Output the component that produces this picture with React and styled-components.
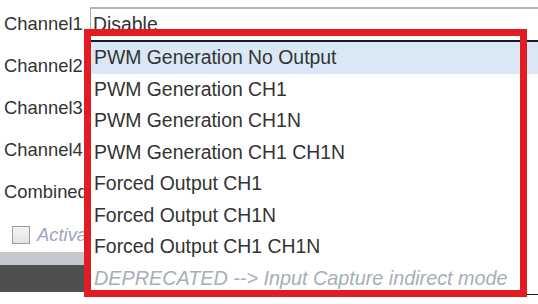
import React from 'react'
import styled, { createGlobalStyle } from 'styled-components'

const GlobalStyle = createGlobalStyle`
    html, body {
        margin: 0;
        padding: 0;
        background: #ffffff;
    }
    body {
        font-family: "Liberation Sans", Arial, sans-serif;
        color: #333333;
    }
`

const Screen = styled.div`
    position: relative;
    width: 538px;
    height: 304px;
    overflow: hidden;
    background: #ffffff;
`

const Form = styled.div`
    display: flex;
    flex-direction: column;
    padding-top: 3px;
`

const Row = styled.div`
    display: flex;
    align-items: center;
    height: 42px;
`

const Label = styled.div`
    width: 86px;
    padding-left: 4px;
    font-size: 18.4px;
    white-space: nowrap;
    overflow: hidden;
    flex-shrink: 0;
`

const Select = styled.div`
    flex: 1;
    align-self: flex-start;
    margin-top: 4px;
    height: 34px;
    border-top: 2px solid #b4b4b4;
    border-left: 1px solid #a8a8a8;
    padding-left: 2px;
    font-size: 19.4px;
    line-height: 30px;
    box-sizing: border-box;
`

const CheckRow = styled.div`
    display: flex;
    align-items: center;
    gap: 7px;
    height: 39px;
    padding-left: 12px;
    padding-top: 4px;
    box-sizing: border-box;
`

const Checkbox = styled.div`
    width: 16px;
    height: 16px;
    border: 1px solid #9c9c9c;
    background: linear-gradient(#f4f4f4, #e4e4e4);
`

const Hint = styled.span`
    font-size: 18.4px;
    font-style: italic;
    color: #9ea6ba;
`

const Footer = styled.div`
    display: flex;
    flex-direction: column;
`

const Band = styled.div`
    height: ${(props) => props.h}px;
    background: ${(props) => props.bg};
`

const Dropdown = styled.div`
    position: absolute;
    left: 91px;
    top: 40px;
    width: 460px;
    background: #ffffff;
    border-top: 2px solid #1c1c1c;
    border-bottom: 1px solid #1c1c1c;
    z-index: 2;
`

const Option = styled.div`
    height: 31.5px;
    padding-left: 3px;
    font-size: ${(props) => (props.muted ? '19.8px' : '19.4px')};
    line-height: 31px;
    white-space: nowrap;
    background: ${(props) => (props.active ? '#dae7f5' : 'transparent')};
    color: ${(props) => (props.muted ? '#a6adbd' : '#333333')};
    font-style: ${(props) => (props.muted ? 'italic' : 'normal')};
`

const Highlight = styled.div`
    position: absolute;
    left: 84px;
    top: 29px;
    width: 443px;
    height: 268px;
    border: 7px solid #e31b22;
    box-sizing: border-box;
    z-index: 3;
`

const labels = ['Channel1', 'Channel2', 'Channel3', 'Channel4', 'Combined Channels']

const options = [
    'PWM Generation No Output',
    'PWM Generation CH1',
    'PWM Generation CH1N',
    'PWM Generation CH1 CH1N',
    'Forced Output CH1',
    'Forced Output CH1N',
    'Forced Output CH1 CH1N',
]

const App = () => {
    return (
        <Screen>
            <GlobalStyle />
            <Form>
                {labels.map((label, i) => (
                    <Row key={label}>
                        <Label>{label}</Label>
                        {i === 0 && <Select>Disable</Select>}
                    </Row>
                ))}
                <CheckRow>
                    <Checkbox />
                    <Hint>Activate-Break-Input</Hint>
                </CheckRow>
            </Form>
            <Footer>
                <Band h={13} bg="#c3c9cc" />
                <Band h={27} bg="#4e504f" />
            </Footer>
            <Dropdown>
                {options.map((opt, i) => (
                    <Option key={opt} active={i === 0}>{opt}</Option>
                ))}
                <Option muted>DEPRECATED --&gt; Input Capture indirect mode</Option>
            </Dropdown>
            <Highlight />
        </Screen>
    )
}

export default App
